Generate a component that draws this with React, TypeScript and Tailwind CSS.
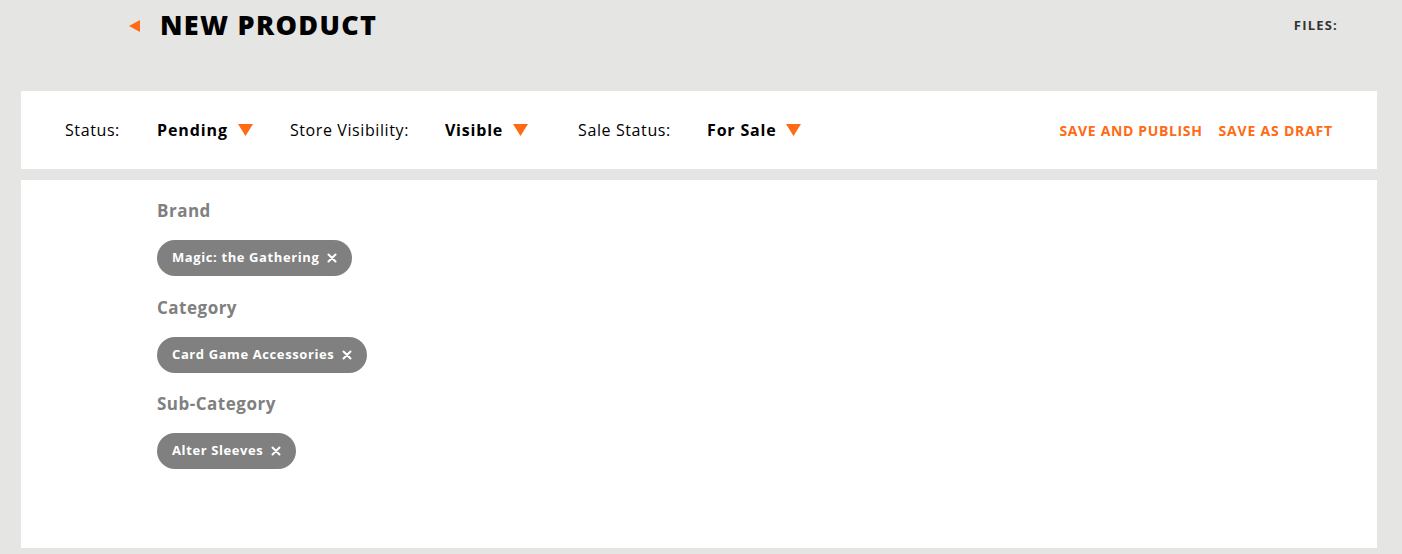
import React from "react";

const Caret = () => (
  <svg width="15" height="12" viewBox="0 0 15 12" className="ml-[10px]">
    <polygon points="0,0 15,0 7.5,12" fill="#ff6a14" />
  </svg>
);

const X = () => (
  <svg width="10" height="10" viewBox="0 0 10 10" className="ml-[8px]">
    <path d="M1.5 1.5 L8.5 8.5 M8.5 1.5 L1.5 8.5" stroke="white" strokeWidth="2" strokeLinecap="round" />
  </svg>
);

const Chip = ({ label }: { label: string }) => (
  <div className="inline-flex items-center h-[36px] rounded-full bg-[#808080] pl-[15px] pr-[15px] text-white text-[13px] font-bold tracking-[0.6px]">
    {label}
    <X />
  </div>
);

export default function App() {
  return (
    <div className="min-h-[554px] bg-[#e5e5e4] pb-[6px]" style={{ fontFamily: "'Open Sans', 'Noto Sans', sans-serif" }}>
      <div className="flex items-center h-[51px] pl-[129px] pr-[64px]">
        <svg width="11" height="12" viewBox="0 0 11 12">
          <polygon points="11,0 11,12 0,6" fill="#ff6a14" />
        </svg>
        <h1 className="ml-[20px] text-[27px] font-extrabold text-black tracking-[1.3px]">
          NEW PRODUCT
        </h1>
        <div className="ml-auto text-[13px] font-bold text-[#333] tracking-[1.2px]">FILES:</div>
      </div>
      <div className="ml-[21px] mr-[25px] mt-[40px] h-[78px] bg-white flex items-center pl-[44px] pr-[44px] text-[16px] text-black">
        <span className="w-[92px] tracking-[0.6px]">Status:</span>
        <span className="font-bold tracking-[0.9px]">Pending</span>
        <Caret />
        <span className="ml-[37px] w-[155px] tracking-[0.6px]">Store Visibility:</span>
        <span className="font-bold tracking-[0.8px]">Visible</span>
        <Caret />
        <span className="ml-[50px] w-[129px] tracking-[0.6px]">Sale Status:</span>
        <span className="font-bold tracking-[0.8px]">For Sale</span>
        <Caret />
        <div className="ml-auto flex gap-[16px] text-[14px] font-bold text-[#ff6a14] tracking-[0.65px]">
          <span>SAVE AND PUBLISH</span>
          <span className="tracking-[0.8px]">SAVE AS DRAFT</span>
        </div>
      </div>
      <div className="ml-[21px] mr-[25px] mt-[11px] h-[368px] bg-white pl-[136px] pt-[20px]">
        <div className="text-[17px] font-bold text-[#808080] leading-[22px] tracking-[0.5px]">Brand</div>
        <div className="mt-[18px]"><Chip label="Magic: the Gathering" /></div>
        <div className="mt-[21px] text-[17px] font-bold text-[#808080] leading-[22px] tracking-[0.5px]">Category</div>
        <div className="mt-[18px]"><Chip label="Card Game Accessories" /></div>
        <div className="mt-[20px] text-[17px] font-bold text-[#808080] leading-[22px] tracking-[0.5px]">Sub-Category</div>
        <div className="mt-[18px]"><Chip label="Alter Sleeves" /></div>
      </div>
    </div>
  );
}
